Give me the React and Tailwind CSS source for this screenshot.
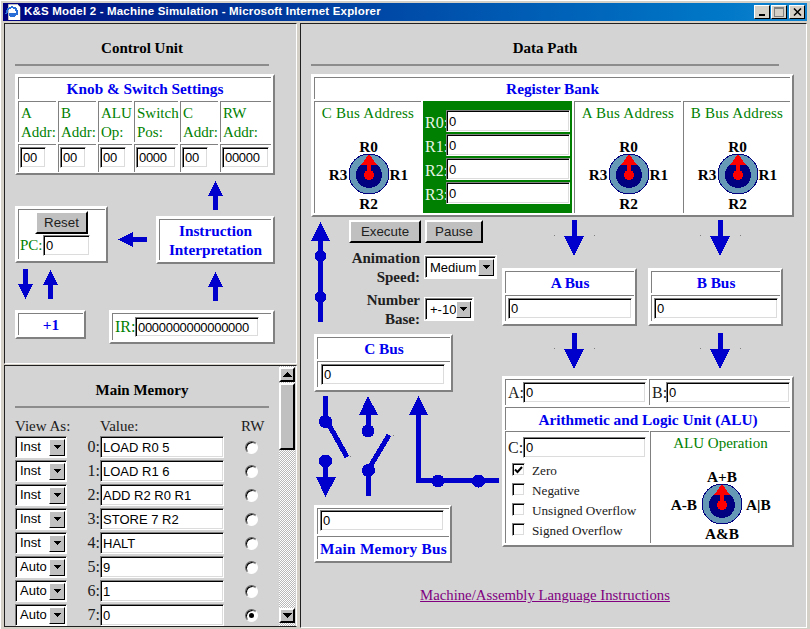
import React from 'react';

const BLUE = '#0000cc';

const Box = ({ className = '', children }) => (
  <div className={`box-border border-2 border-t-white border-l-white border-r-[#808080] border-b-[#808080] bg-white p-px ${className}`}>
    {children}
  </div>
);

const Cell = ({ className = '', children }) => (
  <div className={`box-border border-t border-l border-t-[#808080] border-l-[#808080] ${className}`}>{children}</div>
);

const Field = ({ value, className = '' }) => (
  <input
    readOnly
    value={value}
    className={`box-border block border border-t-[#808080] border-l-[#808080] border-r-white border-b-white bg-white pl-[2px] font-['Liberation_Sans',sans-serif] text-[13px] text-black shadow-[inset_1px_1px_0_#000,inset_-1px_-1px_0_#dcdcdc] outline-none ${className}`}
  />
);

const Select = ({ value, className = '' }) => (
  <div className={`box-border flex h-[22px] items-center justify-between border border-t-[#808080] border-l-[#808080] border-r-white border-b-white bg-white shadow-[inset_1px_1px_0_#000] ${className}`}>
    <span className="pl-[4px] font-['Liberation_Sans',sans-serif] text-[13px] font-normal text-black">{value}</span>
    <span className="mr-px flex h-[17px] w-[16px] items-center justify-center border border-t-white border-l-white border-r-black border-b-black bg-[#c0c0c0]">
      <svg width="7" height="4" viewBox="0 0 7 4" shapeRendering="crispEdges"><path d="M0 0h7L3.5 4z" fill="#000" /></svg>
    </span>
  </div>
);

const Button = ({ children, className = '' }) => (
  <div className={`box-border flex items-center justify-center border-2 border-t-white border-l-white border-r-black border-b-black bg-[#c0c0c0] font-['Liberation_Sans',sans-serif] text-[13.33px] text-[#202020] ${className}`}>
    {children}
  </div>
);

const Heading = ({ children, className = '' }) => (
  <>
    <h2 className={`h-[19px] text-center text-[15px] font-bold leading-[19px] text-black ${className}`}>{children}</h2>
    <div className={`mt-[6px] h-[2px] bg-[#8c8c8c] ${className}`} />
  </>
);

const Title = ({ children, className = '' }) => (
  <div className={`text-center text-[15.3px] font-bold leading-[19px] text-[#0000ee] ${className}`}>{children}</div>
);

// small control unit arrows
const ArrowUp = ({ className = '' }) => (
  <svg className={`block ${className}`} width="15" height="29" viewBox="0 0 15 29" shapeRendering="crispEdges">
    <path d="M7.5 0L15 15H10V29H5V15H0Z" fill={BLUE} />
  </svg>
);
const ArrowDown = ({ className = '' }) => (
  <svg className={`block ${className}`} width="15" height="30" viewBox="0 0 15 30" shapeRendering="crispEdges">
    <path d="M7.5 30L0 15H5V0H10V15H15Z" fill={BLUE} />
  </svg>
);
const ArrowLeft = ({ className = '' }) => (
  <svg className={`block ${className}`} width="29" height="15" viewBox="0 0 29 15" shapeRendering="crispEdges">
    <path d="M0 7.5L15 0V5H29V10H15V15Z" fill={BLUE} />
  </svg>
);

// data path arrow, the image has two stray grey pixels
const BusArrow = ({ className = '' }) => (
  <svg className={`block ${className}`} width="80" height="36" viewBox="0 0 80 36" shapeRendering="crispEdges">
    <path d="M37.5 0H42.5V16H50L40 36L30 16H37.5Z" fill={BLUE} />
    <rect x="20" y="15" width="1" height="1" fill="#808080" />
    <rect x="60" y="15" width="1" height="1" fill="#808080" />
  </svg>
);

const Knob = ({ top, left, right, bottom, className = '' }) => (
  <div className={`grid text-[15.3px] font-bold text-black ${className}`}>
    <div />
    <div className="flex h-[13px] justify-center whitespace-nowrap leading-[13px]">{top}</div>
    <div />
    <div className="flex items-center justify-end whitespace-nowrap pt-[2px]">{left}</div>
    <svg width="42" height="42" viewBox="0 0 42 42" shapeRendering="crispEdges">
      <circle cx="21" cy="21" r="20" fill="#6699b5" stroke="#000080" />
      <circle cx="21" cy="22" r="13" fill="#000080" />
      <path d="M21 1L29 12H23V20H19V12H13Z" fill="#ff0000" />
      <circle cx="21" cy="22" r="5" fill="#ff0000" />
    </svg>
    <div className="flex items-center whitespace-nowrap pt-[2px]">{right}</div>
    <div />
    <div className="flex h-[17px] justify-center whitespace-nowrap leading-[17px]">{bottom}</div>
    <div />
  </div>
);

const Check = ({ checked, label }) => (
  <div className="flex h-[20px] items-start">
    <span className="box-border flex h-[13px] w-[13px] items-center justify-center border border-t-[#808080] border-l-[#808080] border-r-white border-b-white bg-white shadow-[inset_1px_1px_0_#000,inset_-1px_-1px_0_#dcdcdc]">
      {checked && (
        <svg width="9" height="8" viewBox="0 0 9 8"><path d="M1 3.5L3.5 6L8 1" fill="none" stroke="#000" strokeWidth="2" /></svg>
      )}
    </span>
    <span className="ml-[7px] text-[13.2px] leading-[16px] text-[#202020]">{label}</span>
  </div>
);

const Radio = ({ checked }) => (
  <span className="box-border flex h-[13px] w-[13px] items-center justify-center rounded-full border border-t-[#606060] border-l-[#606060] border-r-white border-b-white bg-white shadow-[inset_1px_1px_0_#000]">
    {checked && <span className="h-[5px] w-[5px] rounded-full bg-black" />}
  </span>
);

const knobCols = [
  { top: 'A', bottom: 'Addr:', value: '00', w: 'w-[38px]', field: 'w-[26px]' },
  { top: 'B', bottom: 'Addr:', value: '00', w: 'w-[38px]', field: 'w-[26px]' },
  { top: 'ALU', bottom: 'Op:', value: '00', w: 'w-[34px]', field: 'w-[26px]' },
  { top: 'Switch', bottom: 'Pos:', value: '0000', w: 'w-[44px]', field: 'w-[40px]' },
  { top: 'C', bottom: 'Addr:', value: '00', w: 'w-[38px]', field: 'w-[26px]' },
  { top: 'RW', bottom: 'Addr:', value: '00000', w: 'w-[51px]', field: 'w-[47px]' },
];

const memory = [
  ['Inst', 'LOAD R0 5'],
  ['Inst', 'LOAD R1 6'],
  ['Inst', 'ADD R2 R0 R1'],
  ['Inst', 'STORE 7 R2'],
  ['Inst', 'HALT'],
  ['Auto', '9'],
  ['Auto', '1'],
  ['Auto', '0'],
];

const ControlUnit = () => (
  <section className="box-border h-[341px] border border-t-[#202020] border-l-[#202020] border-r-white border-b-white bg-[#d4d4d4] pl-[10px]">
    <div className="w-[254px] pt-[15px]">
      <Heading>Control Unit</Heading>
    </div>
    <Box className="mt-[8px] h-[101px] w-[260px]">
      <Cell className="h-[22px] w-[253px]">
        <Title className="pt-px">Knob &amp; Switch Settings</Title>
      </Cell>
      <div className="mt-[2px] flex gap-[2px]">
        {knobCols.map((col, i) => (
          <div key={i} className={col.w}>
            <Cell className="h-[41px] pl-[2px] pt-[2px] text-[15px] leading-[19px] text-[#008000]">
              <div>{col.top}</div>
              <div>{col.bottom}</div>
            </Cell>
            <Cell className="mt-[2px] h-[28px] pl-[1px] pt-[2px]">
              <Field value={col.value} className={`h-[21px] tracking-[-0.3px] ${col.field}`} />
            </Cell>
          </div>
        ))}
      </div>
    </Box>

    <div className="flex">
      <div className="w-[141px]">
        <div className="mt-[31px] flex items-start">
          <Box className="h-[57px] w-[93px]">
            <Cell className="h-[50px] w-[87px] pt-[1px]">
              <Button className="ml-[16px] h-[23px] w-[53px]">Reset</Button>
              <div className="mt-px flex h-[21px] items-center text-[15px] text-[#008000]">
                <span className="w-[24px] pl-px">PC:</span>
                <Field value="0" className="h-[21px] w-[47px]" />
              </div>
            </Cell>
          </Box>
          <ArrowLeft className="ml-[10px] mt-[26px]" />
        </div>
        <div className="mt-[6px] flex items-start pl-[3px]">
          <ArrowDown />
          <ArrowUp className="ml-[10px] mt-px" />
        </div>
      </div>
      <div className="ml-0 w-[119px] pt-[6px]">
        <ArrowUp className="ml-[52px]" />
        <Box className="mt-[6px] h-[48px] w-[119px]">
          <Cell className="flex h-[41px] w-[112px] items-center justify-center">
            <Title>Instruction<br />Interpretation</Title>
          </Cell>
        </Box>
        <ArrowUp className="ml-[52px] mt-[8px]" />
      </div>
    </div>

    <div className="mt-[9px] flex items-start">
      <Box className="h-[29px] w-[71px]">
        <Cell className="flex h-[22px] w-[65px] items-center justify-center">
          <Title>+1</Title>
        </Cell>
      </Box>
      <Box className="ml-[23px] h-[34px] w-[166px]">
        <Cell className="flex h-[27px] w-[159px] items-center pl-[2px] text-[16px] text-[#008000]">
          <span className="w-[20px]">IR:</span>
          <Field value="0000000000000000" className="h-[20px] w-[124px] tracking-[-0.3px]" />
        </Cell>
      </Box>
    </div>
  </section>
);

const Scrollbar = () => (
  <div className="flex h-[260px] w-[16px] flex-col bg-[image:repeating-conic-gradient(#ffffff_0_25%,#b8b8b8_0_50%)] bg-[length:2px_2px] pt-px">
    <Button className="h-[15px] w-[16px] shrink-0">
      <svg width="9" height="5" viewBox="0 0 9 5" shapeRendering="crispEdges"><path d="M4.5 0L9 5H0Z" fill="#000" /></svg>
    </Button>
    <div className="mt-px h-[67px] shrink-0 border-2 border-t-white border-l-white border-r-black border-b-black bg-[#c0c0c0]" />
    <div className="flex-1" />
    <Button className="mb-[3px] h-[15px] w-[16px] shrink-0">
      <svg width="9" height="5" viewBox="0 0 9 5" shapeRendering="crispEdges"><path d="M4.5 5L9 0H0Z" fill="#000" /></svg>
    </Button>
  </div>
);

const MainMemory = () => (
  <section className="mt-px box-border flex h-[262px] overflow-hidden border border-t-[#202020] border-l-[#202020] border-r-white border-b-[#202020] bg-[#d4d4d4]">
    <div className="w-[274px] pl-[10px]">
      <div className="w-[254px] pt-[15px]">
        <Heading>Main Memory</Heading>
      </div>
      <div className="mt-[9px] flex h-[19px] text-[15px] leading-[19px] text-[#202020]">
        <span className="w-[85px]">View As:</span>
        <span className="w-[141px]">Value:</span>
        <span>RW</span>
      </div>
      {memory.map(([view, value], i) => (
        <div key={i} className="flex h-[24px] items-start text-[16px] text-[#202020]">
          <Select value={view} className="w-[52px]" />
          <span className="w-[33px] text-right leading-[22px]">{i}:</span>
          <Field value={value} className="h-[22px] w-[124px]" />
          <span className="ml-[21px] mt-[5px]"><Radio checked={i === 7} /></span>
        </div>
      ))}
    </div>
    <Scrollbar />
  </section>
);

const BusBox = ({ name, className = '', inputGap = 'pl-[2px]' }) => (
  <Box className={`h-[58px] ${className}`}>
    <Cell className="flex h-[22px] items-center justify-center">
      <Title>{name}</Title>
    </Cell>
    <Cell className={`mt-[2px] h-[26px] pt-[2px] ${inputGap}`}>
      <Field value="0" className="h-[21px] w-[124px]" />
    </Cell>
  </Box>
);

const DataPath = () => (
  <section className="box-border flex h-[605px] w-[507px] flex-col border border-t-[#202020] border-l-[#202020] border-r-white border-b-white bg-[#d4d4d4] pl-[10px]">
    <div className="w-[468px] pt-[15px]">
      <Heading>Data Path</Heading>
    </div>

    <Box className="mt-[8px] h-[143px] w-[483px]">
      <Cell className="h-[22px] w-[476px]">
        <Title className="pt-px">Register Bank</Title>
      </Cell>
      <div className="mt-[2px] flex h-[112px] gap-[2px]">
        <Cell className="flex w-[107px] flex-col items-center">
          <div className="mt-[2px] text-[15px] leading-[19px] tracking-[0.25px] text-[#008000]">C Bus Address</div>
          <Knob top="R0" left="R3" right="R1" bottom="R2" className="mt-[17px] grid-cols-[32px_42px_31px]" />
        </Cell>
        <div className="w-[149px] bg-[#008000] pt-[9px]">
          {['R0:', 'R1:', 'R2:', 'R3:'].map(r => (
            <div key={r} className="flex h-[24px] items-start pl-[2px] text-[16px] leading-[25px] text-[#e8f4e8]">
              <span className="w-[21px]">{r}</span>
              <Field value="0" className="h-[22px] w-[124px]" />
            </div>
          ))}
        </div>
        {['A Bus Address', 'B Bus Address'].map(t => (
          <Cell key={t} className="flex w-[107px] flex-col items-center">
            <div className="mt-[2px] text-[15px] leading-[19px] tracking-[0.25px] text-[#008000]">{t}</div>
            <Knob top="R0" left="R3" right="R1" bottom="R2" className="mt-[17px] grid-cols-[32px_42px_31px]" />
          </Cell>
        ))}
      </div>
    </Box>

    <div className="flex">
      {/* left column: controls, C bus, switches, memory bus */}
      <div className="w-[191px]">
        <div className="flex h-[117px]">
          <svg className="mt-[5px] block" width="20" height="100" viewBox="0 0 20 100" shapeRendering="crispEdges">
            <path d="M9.5 0L19 19H12V100H7V19H0Z" fill={BLUE} />
            <circle cx="9.5" cy="34" r="6" fill={BLUE} />
            <circle cx="9.5" cy="75" r="6" fill={BLUE} />
          </svg>
          <div className="ml-[18px]">
            <div className="mt-[3px] flex gap-[4px]">
              <Button className="h-[23px] w-[72px]">Execute</Button>
              <Button className="h-[23px] w-[58px]">Pause</Button>
            </div>
            <div className="mt-[6px] flex items-start text-[15px] font-bold leading-[19px] text-[#202020]">
              <div className="w-[71px] text-right">Animation<br />Speed:</div>
              <div className="ml-[4px] mt-[6px] border border-white"><Select value="Medium" className="w-[71px]" /></div>
            </div>
            <div className="mt-[4px] flex items-start text-[15px] font-bold leading-[19px] text-[#202020]">
              <div className="w-[71px] text-right">Number<br />Base:</div>
              <div className="ml-[4px] mt-[6px] border border-white"><Select value="+-10" className="w-[48px]" /></div>
            </div>
          </div>
        </div>

        <BusBox name="C Bus" className="ml-[3px] w-[139px]" inputGap="pl-[3px]" />

        <svg className="block" width="190" height="113" viewBox="311 392 190 113" shapeRendering="crispEdges">
          <path d="M323 396H328V421H323Z" fill={BLUE} />
          <circle cx="325.5" cy="421.5" r="6.5" fill={BLUE} />
          <path d="M328 423L347 457" stroke={BLUE} strokeWidth="5" fill="none" />
          <circle cx="325.5" cy="461" r="6.5" fill={BLUE} />
          <path d="M323 461H328V477H336L325.5 497L316 477H323Z" fill={BLUE} />
          <path d="M368 396L378 415H370.500V431H365.500V415H359Z" fill={BLUE} />
          <circle cx="368" cy="431" r="6.5" fill={BLUE} />
          <path d="M389 435L368 470" stroke={BLUE} strokeWidth="5" fill="none" />
          <circle cx="368.500" cy="470.500" r="6.500" fill={BLUE} />
          <path d="M366 470H371V496H366Z" fill={BLUE} />
          <path d="M418.500 396L428 415H421V478H499V483H416V415H409Z" fill={BLUE} />
          <circle cx="438" cy="481" r="6.500" fill={BLUE} />
          <circle cx="478.500" cy="481" r="6.500" fill={BLUE} />
          <rect x="350" y="456" width="1" height="1" fill="#808080" />
          <rect x="393" y="435" width="1" height="1" fill="#808080" />
        </svg>

        <Box className="ml-[3px] h-[58px] w-[138px]">
          <Cell className="h-[26px] pl-[2px] pt-[1px]">
            <Field value="0" className="h-[21px] w-[124px]" />
          </Cell>
          <Cell className="mt-[2px] flex h-[23px] items-center justify-center">
            <Title className="tracking-[0.25px]">Main Memory Bus</Title>
          </Cell>
        </Box>
      </div>

      {/* right column: buses and ALU */}
      <div className="w-[292px]">
        <div className="mt-[3px] flex pl-[32px]">
          <BusArrow />
          <BusArrow className="ml-[66px]" />
        </div>
        <div className="mt-[12px] flex gap-[11px]">
          <BusBox name="A Bus" className="w-[135px]" />
          <BusBox name="B Bus" className="w-[135px]" />
        </div>
        <div className="mt-[7px] flex pl-[32px]">
          <BusArrow />
          <BusArrow className="ml-[66px]" />
        </div>
        <Box className="mt-[7px] h-[171px] w-[292px]">
          <div className="flex gap-[2px]">
            <Cell className="flex h-[26px] w-[142px] items-center pl-[2px] text-[16px] text-[#202020]">
              <span className="w-[15px]">A:</span>
              <Field value="0" className="h-[21px] w-[123px]" />
            </Cell>
            <Cell className="flex h-[26px] w-[141px] items-center pl-[2px] text-[16px] text-[#202020]">
              <span className="w-[14px]">B:</span>
              <Field value="0" className="h-[21px] w-[124px]" />
            </Cell>
          </div>
          <Cell className="mt-[2px] flex h-[23px] w-[285px] items-center justify-center">
            <Title>Arithmetic and Logic Unit (ALU)</Title>
          </Cell>
          <div className="mt-px flex gap-px">
            <Cell className="h-[112px] w-[144px] pl-[2px] pt-[5px]">
              <div className="flex h-[21px] items-center text-[16px] text-[#202020]">
                <span className="w-[15px]">C:</span>
                <Field value="0" className="h-[21px] w-[123px]" />
              </div>
              <div className="mt-[5px] pl-[4px]">
                <Check checked label="Zero" />
                <Check label="Negative" />
                <Check label="Unsigned Overflow" />
                <Check label="Signed Overflow" />
              </div>
            </Cell>
            <Cell className="flex h-[112px] w-[140px] flex-col items-center">
              <div className="mt-[2px] text-[15px] leading-[19px] text-[#008000]">ALU Operation</div>
              <Knob top="A+B" left={<span className="pr-[4px]">A-B</span>} right={<span className="pl-[3px]">A|B</span>} bottom="A&B" className="mt-[17px] grid-cols-[50px_42px_47px]" />
            </Cell>
          </div>
        </Box>
      </div>
    </div>

    <a className="mt-[23px] w-[468px] text-center text-[14.75px] leading-[19px] text-[#800080] underline">Machine/Assembly Language Instructions</a>
  </section>
);

const App = () => (
  <div className="box-border flex h-[629px] w-[810px] flex-col overflow-hidden border-t border-l border-t-white border-l-white bg-[#d4d0c8] pl-[2px] pr-[3px] pt-[2px] font-['Liberation_Serif',serif]">
    <header className="flex h-[18px] shrink-0 items-center bg-linear-to-r from-[#000080] to-[#1084d0] pl-[2px]">
      <svg width="16" height="16" viewBox="0 0 16 16" shapeRendering="crispEdges">
        <path d="M3 0H12L15 3V16H3Z" fill="#fff" stroke="#808080" strokeWidth="0.5" />
        <path d="M1.500 9.500C1.500 5 5 3 8 3.500C11 4 12 7 12 9.500H4.500C4.500 12 8 13 11 11" fill="none" stroke="#2a6fd8" strokeWidth="2" />
      </svg>
      <span className="ml-[3px] font-['Liberation_Sans',sans-serif] text-[11.5px] font-bold tracking-[0.18px] text-white">K&amp;S Model 2 - Machine Simulation - Microsoft Internet Explorer</span>
      <div className="ml-auto flex pr-[2px]">
        <div className="flex h-[14px] w-[16px] items-end justify-center border border-t-white border-l-white border-r-black border-b-black bg-[#d4d0c8] pb-[2px]">
          <div className="h-[2px] w-[6px] bg-black" />
        </div>
        <div className="ml-px flex h-[14px] w-[16px] items-center justify-center border border-t-white border-l-white border-r-black border-b-black bg-[#d4d0c8]">
          <div className="h-[10px] w-[10px] border border-t-2 border-[#808080]" />
        </div>
        <div className="ml-[2px] flex h-[14px] w-[16px] items-center justify-center border border-t-white border-l-white border-r-black border-b-black bg-[#d4d0c8]">
          <svg width="9" height="8" viewBox="0 0 9 8"><path d="M1 0.500L8 7.500M8 0.500L1 7.500" stroke="#000" strokeWidth="1.500" /></svg>
        </div>
      </div>
    </header>
    <div className="mt-[2px] flex">
      <div className="ml-px w-[293px]">
        <ControlUnit />
        <MainMemory />
      </div>
      <div className="ml-[3px]">
        <DataPath />
      </div>
    </div>
  </div>
);

export default App;
